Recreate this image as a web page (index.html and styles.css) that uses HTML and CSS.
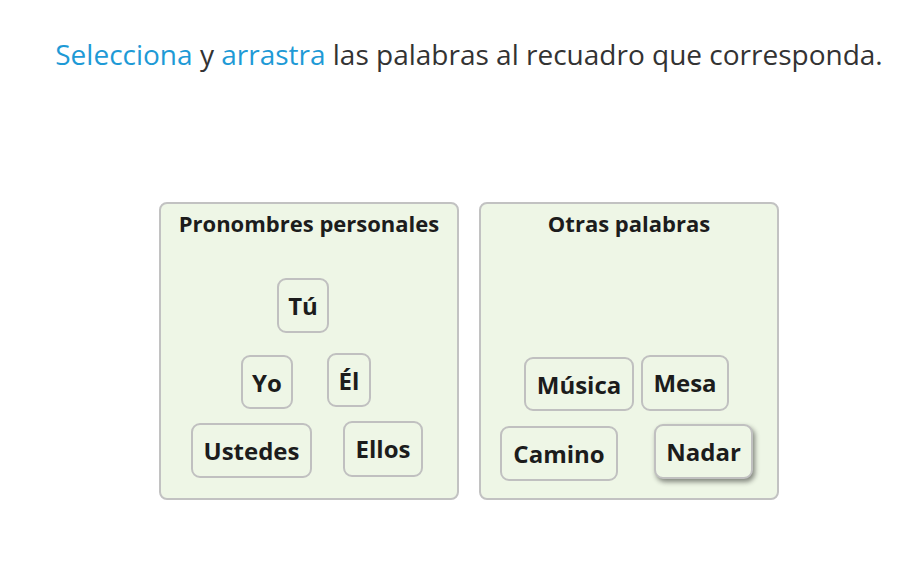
FILE: index.html
```html
<!DOCTYPE html>
<html lang="es">
<head>
<meta charset="utf-8">
<title>Pronombres</title>
<link rel="stylesheet" href="styles.css">
</head>
<body>
<main class="page">
  <p class="instructions"><span class="hl">Selecciona</span> y <span class="hl">arrastra</span> las palabras al recuadro que corresponda.</p>
  <div class="boxes">
    <section class="box">
      <h2 class="box-title">Pronombres personales</h2>
      <div class="tile t-tu">Tú</div>
      <div class="tile t-yo">Yo</div>
      <div class="tile t-el">Él</div>
      <div class="tile t-ustedes">Ustedes</div>
      <div class="tile t-ellos">Ellos</div>
    </section>
    <section class="box">
      <h2 class="box-title">Otras palabras</h2>
      <div class="tile t-musica">Música</div>
      <div class="tile t-mesa">Mesa</div>
      <div class="tile t-camino">Camino</div>
      <div class="tile t-nadar dragging">Nadar</div>
    </section>
  </div>
</main>
</body>
</html>
```
FILE: styles.css
```css
* { box-sizing: border-box; }
html, body { margin: 0; padding: 0; background: #fff; }
body {
  font-family: "Open Sans", "Noto Sans", "DejaVu Sans", sans-serif;
  color: #222;
}
.page {
  width: 920px;
  height: 575px;
  padding-top: 33px;
  padding-left: 18px;
}
.instructions {
  margin: 0;
  text-align: center;
  font-size: 28px;
  line-height: 42px;
  color: #333;
}
.hl { color: #1e9ad6; }
.boxes {
  display: flex;
  justify-content: center;
  gap: 20px;
  margin-top: 127px;
}
.box {
  position: relative;
  width: 300px;
  height: 298px;
  border: 2px solid #c2c2c2;
  border-radius: 8px;
  background: #eef6e6;
}
.box-title {
  margin: 4px 0 0;
  text-align: center;
  font-size: 22px;
  font-weight: 700;
  line-height: 30px;
  color: #1c1c1c;
}
.tile {
  position: absolute;
  height: 55px;
  border: 2px solid #c0c0c0;
  border-radius: 9px;
  background: #eef6e6;
  font-size: 24px;
  font-weight: 700;
  line-height: 52px;
  text-align: center;
  color: #1c1c1c;
}
.dragging { box-shadow: 2px 3px 5px rgba(0,0,0,0.45); }
.t-tu { left: 116px; top: 74px; width: 52px; }
.t-yo { left: 80px; top: 151px; width: 52px; height: 54px; }
.t-el { left: 166px; top: 149px; width: 44px; height: 54px; }
.t-ustedes { left: 30px; top: 219px; width: 121px; }
.t-ellos { left: 182px; top: 217px; width: 80px; height: 56px; }
.t-musica { left: 43px; top: 153px; width: 110px; height: 54px; }
.t-mesa { left: 160px; top: 151px; width: 88px; height: 56px; }
.t-camino { left: 19px; top: 222px; width: 118px; }
.t-nadar { left: 173px; top: 220px; width: 99px; }
```
